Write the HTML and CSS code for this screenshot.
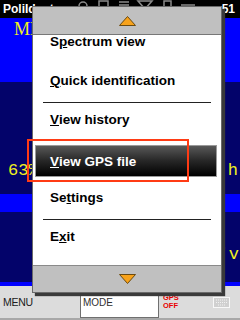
FILE: index.html
```html
<!DOCTYPE html>
<html lang="en">
<head>
    <meta charset="UTF-8">
    <meta name="viewport" content="width=240, initial-scale=1.0">
    <title>PoliIdentify</title>
    <link rel="stylesheet" href="styles.css">
</head>
<body>
    <div class="screen">
        <div class="status">
            <span class="title">PoliIdent</span>
            <svg class="icons" width="150" height="18" viewBox="0 0 150 18">
                <g fill="none" stroke="#8a8a8a" stroke-width="1.5">
                    <circle cx="29" cy="6" r="4"/>
                    <rect x="45" y="1" width="9" height="8"/>
                    <path d="M65 2 h10 M65 5 h10"/>
                    <path d="M84 1 h14 l-7 8 z"/>
                    <rect x="110" y="1" width="7" height="9"/>
                    <path d="M127 5 h14"/>
                </g>
            </svg>
            <span class="clock">51</span>
        </div>

        <div class="bg">
            <div class="band bright b1"><span class="serif">MHz</span></div>
            <div class="band navy b2"><span class="left">63%</span><span class="right">'h</span></div>
            <div class="band bright b3"></div>
            <div class="band navy b4"><span></span><span class="right">'v</span></div>
            <div class="band bright b5"></div>
        </div>

        <div class="softkeys">
            <span class="menu">MENU</span>
            <div class="mode">MODE</div>
            <div class="gps">GPS<br>OFF</div>
            <svg class="kbd" width="17" height="11" viewBox="0 0 17 11">
                <rect x="0.5" y="0.5" width="16" height="10" fill="#d0d0d0" stroke="#f8f8f8"/>
                <path d="M3 3 h11 M3 5.5 h11 M5 8 h7" stroke="#f2f2f2" stroke-dasharray="1 1"/>
            </svg>
        </div>

        <div class="popup">
            <div class="scroll up">
                <svg width="17" height="10" viewBox="0 0 17 10">
                    <polygon points="0.5,9.5 8.5,0.5 16.5,9.5" fill="#f7a21b" stroke="#6b4a10"/>
                </svg>
            </div>
            <div class="list">
                <div class="items">
                    <div class="item">S<u>p</u>ectrum view</div>
                    <div class="item"><u>Q</u>uick identification</div>
                    <div class="sep"></div>
                    <div class="item"><u>V</u>iew history</div>
                    <div class="item sel"><div class="box"><u>V</u>iew GPS file</div></div>
                    <div class="item">Se<u>t</u>tings</div>
                    <div class="sep"></div>
                    <div class="item">E<u>x</u>it</div>
                </div>
            </div>
            <div class="scroll down">
                <svg width="17" height="10" viewBox="0 0 17 10">
                    <polygon points="0.5,0.5 8.5,9.5 16.5,0.5" fill="#f7a21b" stroke="#6b4a10"/>
                </svg>
            </div>
        </div>

        <div class="mark"></div>
    </div>
</body>
</html>
```

FILE: styles.css
```css
body {
    margin: 0;
    background: #000;
}
.screen {
    position: relative;
    width: 240px;
    height: 320px;
    overflow: hidden;
    display: flex;
    flex-direction: column;
    font-family: "Liberation Sans", Arial, sans-serif;
}
.status {
    height: 18px;
    flex: none;
    background: #000;
    color: #fff;
    display: flex;
    align-items: center;
    font-weight: bold;
    font-size: 12px;
}
.title {
    padding-left: 3px;
    white-space: nowrap;
}
.icons {
    display: block;
}
.clock {
    margin-left: auto;
    padding-right: 5px;
}
.bg {
    display: flex;
    flex-direction: column;
    flex: none;
}
.band {
    display: flex;
    justify-content: space-between;
    align-items: flex-start;
    color: #f0f020;
    font-family: "Liberation Mono", monospace;
    font-size: 17px;
    line-height: 17px;
    box-sizing: border-box;
}
.bright {
    background: #0000ff;
}
.navy {
    background: #03036a;
}
.b1 {
    height: 64px;
    padding: 2px 0 0 14px;
}
.serif {
    font-family: "Liberation Serif", serif;
    font-size: 18px;
    line-height: 18px;
}
.b2 {
    height: 112px;
    padding: 80px 2px 0 8px;
}
.b3 {
    height: 18px;
}
.b4 {
    height: 70px;
    padding: 34px 1px 0 8px;
}
.b5 {
    height: 4px;
}
.softkeys {
    height: 34px;
    flex: none;
    box-sizing: border-box;
    background: #dcdcdc;
    border-bottom: 2px solid #a8a8a8;
    display: flex;
    align-items: center;
}
.menu {
    width: 77px;
    padding-left: 3px;
    font-size: 10.5px;
    letter-spacing: -0.3px;
    color: #202020;
}
.mode {
    width: 79px;
    height: 30px;
    margin-top: 2px;
    box-sizing: border-box;
    background: #fff;
    border: 1px solid #707070;
    border-top: none;
    padding-left: 2px;
    display: flex;
    align-items: center;
    font-size: 10px;
    color: #303030;
}
.gps {
    margin-left: 4px;
    color: #e80000;
    font-size: 7.5px;
    font-weight: bold;
    line-height: 8px;
}
.kbd {
    display: block;
    margin-left: auto;
    margin-right: 10px;
}
.popup {
    position: absolute;
    left: 32px;
    top: 6px;
    width: 190px;
    height: 287px;
    box-sizing: border-box;
    border: 1px solid #6a6a6a;
    box-shadow: 3px 3px 1px #3a3a3a;
    background: #fff;
    display: flex;
    flex-direction: column;
}
.scroll {
    flex: none;
    background: #c0c0c0;
    display: flex;
    align-items: center;
    justify-content: center;
}
.scroll svg {
    display: block;
}
.up {
    height: 28px;
    box-sizing: border-box;
    border-bottom: 1px solid #777;
}
.down {
    height: 27px;
    box-sizing: border-box;
    border-top: 1px solid #8a8a8a;
}
.list {
    flex: 1;
    overflow: hidden;
}
.items {
    margin-top: -13px;
}
.item {
    height: 39px;
    box-sizing: border-box;
    display: flex;
    align-items: center;
    padding-left: 17px;
    font-weight: bold;
    font-size: 13.5px;
    color: #000;
    white-space: nowrap;
}
.item u {
    text-underline-offset: 1px;
}
.sep {
    height: 1px;
    background: #222;
    margin: 2px 10px -3px 10px;
}
.item.sel {
    padding: 6px 4px 1px 2px;
}
.box {
    flex: 1;
    height: 32px;
    box-sizing: border-box;
    border: 1px solid #9a9a9a;
    background: linear-gradient(#585858, #262626 50%, #000);
    color: #fff;
    padding-left: 14px;
    display: flex;
    align-items: center;
}
.mark {
    position: absolute;
    left: 27px;
    top: 139px;
    width: 162px;
    height: 43px;
    box-sizing: border-box;
    border: 2px solid #ff3b14;
}
```
